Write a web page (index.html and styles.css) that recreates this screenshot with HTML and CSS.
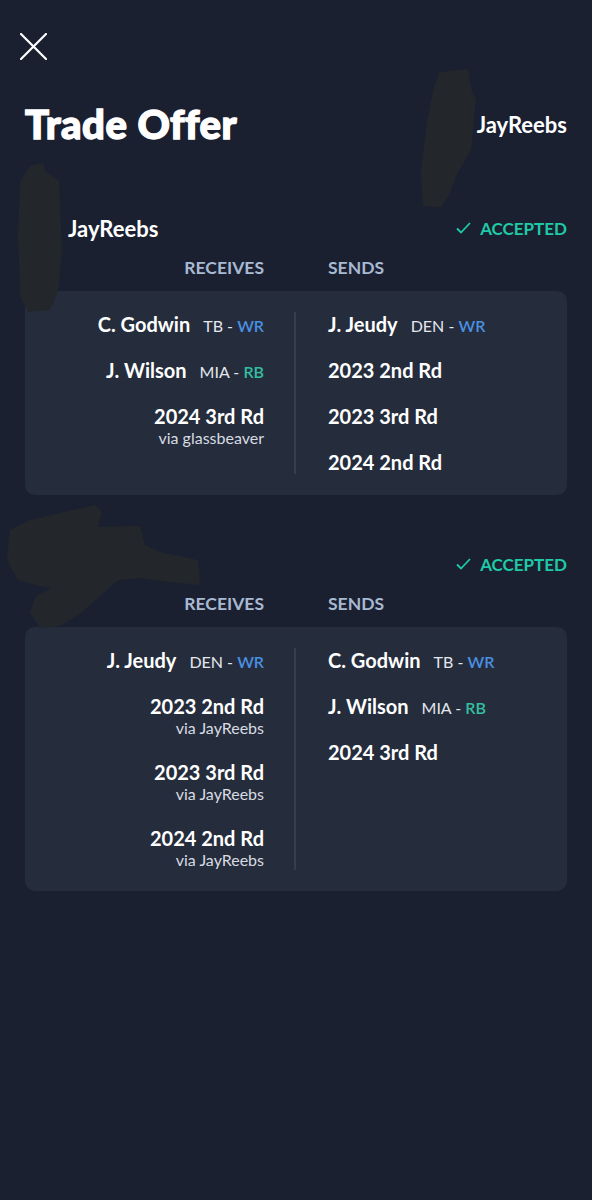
FILE: index.html
```html
<!DOCTYPE html>
<html lang="en">
<head>
    <meta charset="UTF-8">
    <meta name="viewport" content="width=device-width, initial-scale=1.0">
    <title>Trade Offer</title>
    <link rel="stylesheet" href="styles.css">
</head>
<body>
    <div class="screen">
        <button class="close-btn" aria-label="Close">
            <svg width="27" height="27" viewBox="0 0 27 27">
                <path d="M1 1 L26 26 M26 1 L1 26" stroke="#fff" stroke-width="2.2" stroke-linecap="round" fill="none"/>
            </svg>
        </button>

        <header class="title-row">
            <h1>Trade Offer</h1>
            <span class="owner">JayReebs</span>
        </header>

        <!-- first side of the trade -->
        <section class="trade">
            <div class="trade-head">
                <div class="team">
                    <span class="avatar"></span>
                    <span class="team-name">JayReebs</span>
                </div>
                <div class="status">
                    <svg width="15" height="12" viewBox="0 0 15 12">
                        <path d="M1 6.5 L5 10.5 L14 1" stroke="currentColor" stroke-width="1.8" fill="none"/>
                    </svg>
                    ACCEPTED
                </div>
            </div>
            <div class="col-labels">
                <span class="label-in">RECEIVES</span>
                <span class="label-out">SENDS</span>
            </div>
            <div class="card">
                <div class="col col-in">
                    <div class="asset"><span class="name">C. Godwin</span><span class="meta">TB - <span class="wr">WR</span></span></div>
                    <div class="asset"><span class="name">J. Wilson</span><span class="meta">MIA - <span class="rb">RB</span></span></div>
                    <div class="pick"><span class="name">2024 3rd Rd</span><span class="via">via glassbeaver</span></div>
                </div>
                <div class="col col-out">
                    <div class="asset"><span class="name">J. Jeudy</span><span class="meta">DEN - <span class="wr">WR</span></span></div>
                    <div class="pick"><span class="name">2023 2nd Rd</span></div>
                    <div class="pick"><span class="name">2023 3rd Rd</span></div>
                    <div class="pick"><span class="name">2024 2nd Rd</span></div>
                </div>
            </div>
        </section>

        <!-- second side of the trade -->
        <section class="trade">
            <div class="trade-head">
                <div class="team">
                    <span class="avatar"></span>
                    <span class="team-name"></span>
                </div>
                <div class="status">
                    <svg width="15" height="12" viewBox="0 0 15 12">
                        <path d="M1 6.5 L5 10.5 L14 1" stroke="currentColor" stroke-width="1.8" fill="none"/>
                    </svg>
                    ACCEPTED
                </div>
            </div>
            <div class="col-labels">
                <span class="label-in">RECEIVES</span>
                <span class="label-out">SENDS</span>
            </div>
            <div class="card">
                <div class="col col-in">
                    <div class="asset"><span class="name">J. Jeudy</span><span class="meta">DEN - <span class="wr">WR</span></span></div>
                    <div class="pick"><span class="name">2023 2nd Rd</span><span class="via">via JayReebs</span></div>
                    <div class="pick"><span class="name">2023 3rd Rd</span><span class="via">via JayReebs</span></div>
                    <div class="pick"><span class="name">2024 2nd Rd</span><span class="via">via JayReebs</span></div>
                </div>
                <div class="col col-out">
                    <div class="asset"><span class="name">C. Godwin</span><span class="meta">TB - <span class="wr">WR</span></span></div>
                    <div class="asset"><span class="name">J. Wilson</span><span class="meta">MIA - <span class="rb">RB</span></span></div>
                    <div class="pick"><span class="name">2024 3rd Rd</span></div>
                </div>
            </div>
        </section>

        <!-- marker scribbles over the avatars -->
        <svg class="redactions" width="592" height="1200" viewBox="0 0 592 1200">
            <path d="M440 72 L468 69 L472 92 L476 100 L471 150 L457 174 L449 195 L441 207 L423 206 L421 172 L427 122 L434 86 Z"/>
            <path d="M30 166 L43 163 L46 172 L59 180 L62 250 L58 292 L50 310 L28 312 L20 296 L18 232 L20 182 Z"/>
            <path d="M10 530 L30 520 L60 513 L95 505 L102 512 L98 527 L140 526 L145 545 L160 552 L198 560 L200 585 L170 582 L140 578 L118 580 L100 596 L82 612 L60 626 L40 628 L30 612 L36 596 L52 588 L40 586 L18 580 L7 560 Z"/>
        </svg>
    </div>
</body>
</html>
```

FILE: styles.css
```css
* {
    box-sizing: border-box;
}
body {
    margin: 0;
    padding: 0;
    background-color: #1a2030;
    color: #fff;
    font-family: Lato, "Open Sans", Arial, sans-serif;
}
.screen {
    position: relative;
    width: 592px;
    min-height: 1200px;
    padding: 33px 25px 0;
}
.close-btn {
    display: block;
    padding: 0;
    margin: 0 0 0 -5px;
    border: none;
    background: none;
    width: 27px;
    height: 27px;
    cursor: pointer;
}
.close-btn svg {
    display: block;
}
.title-row {
    display: flex;
    justify-content: space-between;
    align-items: center;
    margin-top: 41px;
    height: 46px;
}
.title-row h1 {
    margin: 0;
    font-family: "Lato Black", Lato, Arial, sans-serif;
    font-size: 40px;
    font-weight: 900;
    line-height: 46px;
    letter-spacing: 0.5px;
    -webkit-text-stroke: 1.4px #fff;
}
.owner {
    font-size: 22px;
    font-weight: 700;
}
.trade {
    margin-top: 69px;
}
.trade + .trade {
    margin-top: 57px;
}
.trade-head {
    display: flex;
    justify-content: space-between;
    align-items: center;
    height: 24px;
}
.team {
    display: flex;
    align-items: center;
    gap: 11px;
}
.avatar {
    width: 32px;
    height: 24px;
}
.team-name {
    font-size: 22px;
    font-weight: 700;
}
.status {
    display: flex;
    align-items: center;
    gap: 9px;
    color: #1fcaa6;
    font-size: 17px;
    font-weight: 700;
}
.col-labels {
    display: grid;
    grid-template-columns: 1fr 1fr;
    margin-top: 18px;
    line-height: 20px;
    color: #a8b9d2;
    font-size: 17.5px;
    font-weight: 700;
}
.label-in {
    text-align: right;
    padding-right: 32px;
}
.label-out {
    padding-left: 32px;
}
.card {
    display: grid;
    grid-template-columns: 1fr 1fr;
    margin-top: 13px;
    padding: 21px 0;
    background-color: #252d3d;
    border-radius: 10px;
}
.col {
    display: flex;
    flex-direction: column;
    gap: 22px;
}
.col-in {
    align-items: flex-end;
    padding-right: 30px;
    border-right: 2px solid #353e4f;
}
.col-out {
    align-items: flex-start;
    padding-left: 32px;
}
.asset {
    display: flex;
    align-items: baseline;
    gap: 13px;
    height: 24px;
    line-height: 24px;
}
.pick {
    display: flex;
    flex-direction: column;
}
.col-in .pick {
    align-items: flex-end;
}
.name {
    font-size: 20px;
    font-weight: 700;
    line-height: 24px;
}
.meta {
    font-size: 16px;
    line-height: 24px;
    color: #e4e7ec;
}
.wr {
    color: #4a90e2;
    font-weight: 600;
}
.rb {
    color: #33bf9f;
    font-weight: 600;
}
.via {
    font-size: 16px;
    line-height: 20px;
    color: #d8dbe1;
}
.redactions {
    position: absolute;
    top: 0;
    left: 0;
    pointer-events: none;
    fill: #23262b;
}
```
